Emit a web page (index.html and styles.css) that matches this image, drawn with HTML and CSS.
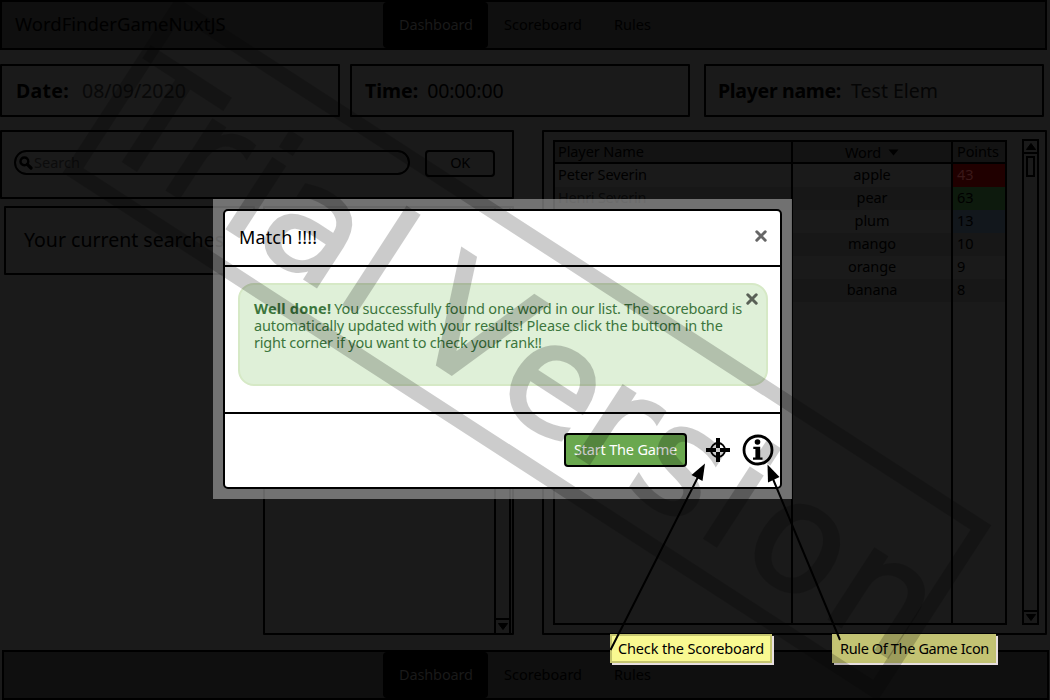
FILE: index.html
```html
<!DOCTYPE html>
<html lang="en">
<head>
<meta charset="utf-8">
<title>WordFinderGameNuxtJS</title>
<link rel="stylesheet" href="styles.css">
</head>
<body>
<div class="screen">
  <header class="nav">
    <div class="brand"><span>WordFinderGameNuxtJS</span></div>
    <nav class="tabs"><a class="tab active"><span>Dashboard</span></a><a class="tab"><span>Scoreboard</span></a><a class="tab"><span>Rules</span></a></nav>
  </header>

  <section class="info">
    <div class="box date"><b>Date:</b><span>08/09/2020</span></div>
    <div class="box time"><b>Time:</b><span>00:00:00</span></div>
    <div class="box player"><b>Player name:</b><span>Test Elem</span></div>
  </section>

  <main class="main">
    <div class="left">
      <div class="search box">
        <div class="field">
          <svg width="14" height="14" viewBox="0 0 14 14"><circle cx="5.4" cy="5.4" r="3.9" fill="none" stroke="#000" stroke-width="2.4"/><path d="M8.3 8.3L12 12" stroke="#000" stroke-width="3.2" stroke-linecap="round"/></svg>
          <span>Search</span>
        </div>
        <div class="ok"><span>OK</span></div>
      </div>
      <div class="lists">
        <div class="current box"><span>Your current searches:</span></div>
        <div class="list box">
          <div class="bar"><svg class="down" width="10" height="7" viewBox="0 0 10 7"><path d="M0.5 0.5H9.5L5 6.5Z" stroke="#000" stroke-linejoin="round"/></svg></div>
        </div>
      </div>
    </div>
    <div class="right box">
      <div class="table">
        <div class="col names"><div class="cell head"><span>Player Name</span></div><div class="cell"><span>Peter Severin</span></div><div class="cell alt dim"><span>Henri Severin</span></div></div>
        <div class="col words"><div class="cell head"><span>Word</span><svg width="11" height="7" viewBox="0 0 11 7"><path d="M0.5 0.5H10.5L5.5 6.5Z"/></svg></div><div class="cell"><span>apple</span></div><div class="cell alt"><span>pear</span></div><div class="cell"><span>plum</span></div><div class="cell alt"><span>mango</span></div><div class="cell"><span>orange</span></div><div class="cell alt"><span>banana</span></div></div>
        <div class="col points"><div class="cell head"><span>Points</span></div><div class="cell red"><span>43</span></div><div class="cell green"><span>63</span></div><div class="cell blue"><span>13</span></div><div class="cell alt"><span>10</span></div><div class="cell"><span>9</span></div><div class="cell alt"><span>8</span></div></div>
      </div>
      <div class="scroll">
        <div class="up"><svg width="10" height="7" viewBox="0 0 10 7"><path d="M0.5 6.5H9.5L5 0.5Z" stroke="#000" stroke-linejoin="round"/></svg></div>
        <div class="thumb"></div>
        <div class="down"><svg width="10" height="7" viewBox="0 0 10 7"><path d="M0.5 0.5H9.5L5 6.5Z" stroke="#000" stroke-linejoin="round"/></svg></div>
      </div>
    </div>
  </main>

  <footer class="nav foot">
    <nav class="tabs"><a class="tab active"><span>Dashboard</span></a><a class="tab"><span>Scoreboard</span></a><a class="tab"><span>Rules</span></a></nav>
  </footer>

  <div class="halo">
    <div class="dialog">
      <div class="dialog-head"><span>Match !!!!</span>
        <svg width="12" height="12" viewBox="0 0 12 12"><path d="M1.8 1.8L10.2 10.2M10.2 1.8L1.8 10.2" stroke="#666" stroke-width="3" stroke-linecap="round"/></svg>
      </div>
      <div class="dialog-body">
        <div class="alert">
          <p><b>Well done!</b><span class="l1">You successfully found one word in our list. The scoreboard is</span><br><span class="l2">automatically updated with your results! Please click the buttom in the</span><br><span class="l3">right corner if you want to check your rank!!</span></p>
          <svg width="12" height="12" viewBox="0 0 12 12"><path d="M1.8 1.8L10.2 10.2M10.2 1.8L1.8 10.2" stroke="#596056" stroke-width="3" stroke-linecap="round"/></svg>
        </div>
      </div>
      <div class="dialog-foot">
        <div class="start"><span>Start The Game</span></div>
        <svg class="target" width="24" height="24" viewBox="0 0 24 24" stroke="#000" fill="none"><circle cx="12" cy="12" r="7" stroke-width="1.8"/><path d="M12 0V10M12 14V24M0 12H10M14 12H24" stroke-width="4"/></svg>
        <svg class="about" width="32" height="32" viewBox="0 0 32 32"><circle cx="16" cy="16" r="14" fill="none" stroke="#000" stroke-width="2.8"/><circle cx="15.5" cy="8" r="2.8"/><path d="M11.3 12.7H18.2V23.6H20.5V25.8H11V23.6H13.4V15H11.3Z"/></svg>
      </div>
    </div>
  </div>

  <div class="note first"><span>Check the Scoreboard</span></div>
  <div class="note second"><span>Rule Of The Game Icon</span></div>

  <svg class="marks" width="1050" height="700" viewBox="0 0 1050 700">
    <path d="M610.500 650L699 475M840 640L773 479" stroke="#000" stroke-width="2"/>
    <path d="M705 463.500L702.500 481L691.500 475Z"/>
    <path d="M767.500 464.500L779.500 477L768 482.500Z"/>
    <g transform="translate(527 349) rotate(32.940)">
      <rect x="-478" y="-97" width="956" height="194" fill="none" stroke="#000" stroke-opacity=".2" stroke-width="15"/>
      <g opacity=".2"><text class="trial" y="62" x="-479 -402 -331 -290 -192 -150 -110 -4 87 154 238 289 387">Trial Version</text></g>
    </g>
  </svg>
</div>
</body>
</html>
```
FILE: styles.css
```css
* { box-sizing: border-box; }
body { margin: 0; background: #1a1a1a; font-family: "Noto Sans", "Open Sans", sans-serif; font-size: 14.5px; color: #000; }
svg { display: block; flex: none; }
span, b { white-space: nowrap; }
.screen { position: relative; width: 1050px; height: 700px; overflow: hidden; display: flex; flex-direction: column; background: #1a1a1a; }
.box { border: 2px solid #000; border-radius: 1px; }

.nav { display: flex; width: 1047px; height: 50px; border: 2px solid #000; background: #0f0f0f; flex: none; }
.brand { width: 381px; padding-left: 13px; font-size: 18.5px; line-height: 44px; }
.tabs { display: flex; }
.tab { padding: 0 16px; line-height: 45px; border-radius: 4px; }
.tab.active { width: 105px; background: #000; color: #1a1a1a; letter-spacing: -.13px; }
.foot { margin: 15px 0 0 2px; }
.foot .tabs { margin-left: 379px; }

.info { display: flex; margin-top: 14px; height: 53px; font-size: 19.5px; line-height: 49px; }
.info .box { width: 340px; padding-left: 14px; }
.date b { letter-spacing: .3px; }
.date span { margin-left: 13px; color: #090909; }
.time { margin-left: 10px; }
.info .time { padding-left: 13px; }
.time span { margin-left: 9px; letter-spacing: -.15px; }
.player { margin-left: 14px; }
.info .player { padding-left: 12px; }
.player b { letter-spacing: -.3px; }
.player span { margin-left: 10px; color: #050505; }

.main { display: flex; gap: 28px; margin-top: 13px; height: 505px; }
.left { width: 514px; display: flex; flex-direction: column; gap: 7px; }
.search { display: flex; height: 69px; padding: 18px 0 0 12px; gap: 15px; }
.field { display: flex; align-items: center; gap: 1px; width: 396px; height: 25px; border: 2px solid #000; border-radius: 13px; padding-left: 3px; color: #0c0c0c; }
.field span { margin-top: -2px; }
.ok { width: 70px; height: 27px; border: 2px solid #000; border-radius: 4px; text-align: center; line-height: 21px; letter-spacing: -.4px; }
.lists { display: flex; gap: 8px; padding-left: 4px; height: 429px; }
.current { width: 251px; height: 69px; padding-left: 18px; font-size: 19.5px; line-height: 64px; }
.list { width: 251px; display: flex; justify-content: flex-end; padding-right: 1px; }
.bar { width: 17px; border: solid #000; border-width: 0 2px; display: flex; flex-direction: column; justify-content: flex-end; }
.bar::before { content: ""; height: 2px; background: #000; margin-bottom: 3px; }
.bar .down { margin: 0 0 3px 2px; }

.right { display: flex; width: 505px; padding: 7px 0 0 9px; }
.table { display: flex; width: 454px; height: 485px; margin-top: 1px; border: 2px solid #000; }
.col { border-right: 2px solid #000; }
.names { width: 238px; }
.words { width: 160px; text-align: center; }
.points { width: 52px; border: 0; }
.cell { height: 23px; line-height: 21px; padding-left: 3px; letter-spacing: -.1px; }
.cell.head { height: 22px; line-height: 19px; border-bottom: 2px solid #000; background: #131313; }
.words .cell { padding-left: 0; }
.words .head { display: flex; justify-content: center; align-items: center; gap: 7px; }
.points .cell { padding-left: 4px; }
.alt { background: #171717; }
.dim { color: #080808; letter-spacing: -.25px; }
.red { background: #200000; color: #3a1818; }
.green { background: #0d1a0d; }
.blue { background: #12171c; }
.scroll { display: flex; flex-direction: column; align-items: center; width: 17px; height: 486px; margin-left: 15px; border: 2px solid #000; }
.up { width: 13px; height: 13px; padding: 2px 0 0 1.500px; border-bottom: 2px solid #000; }
.thumb { width: 9px; height: 21px; margin-top: 2px; border: 2px solid #000; }
.scroll .down { width: 13px; height: 13px; margin-top: auto; padding: 2px 0 0 1.500px; border-top: 2px solid #000; }

.halo { position: absolute; left: 213px; top: 199px; width: 579px; height: 300px; padding: 10px; background: rgba(174, 174, 174, .6); }
.dialog { width: 559px; height: 280px; border: 2px solid #000; border-radius: 5px; background: #fff; }
.dialog-head { display: flex; justify-content: space-between; height: 56px; padding: 0 13px 0 14px; border-bottom: 2px solid #000; font-size: 18px; line-height: 53px; letter-spacing: .15px; }
.dialog-head svg { margin-top: 19px; }
.dialog-body { height: 147px; padding: 16px 12px 0 13px; border-bottom: 2px solid #000; }
.alert { display: flex; justify-content: space-between; height: 103px; padding: 8px 8px 0 14px; border: 2px solid #d6e9c6; border-radius: 16px; background: #dff0d8; color: #3c763d; }
.alert p { width: 491px; margin: 7px 0 0; line-height: 17px; white-space: nowrap; }
.alert b { letter-spacing: .2px; margin-right: 3px; }
.l1 { letter-spacing: -.16px; }
.l2 { letter-spacing: -.13px; }
.l3 { letter-spacing: -.22px; }
.dialog-foot { display: flex; align-items: center; height: 71px; padding-left: 339px; }
.start { width: 123px; height: 34px; border: 2px solid #000; border-radius: 4px; background: #6aa84f; color: #fff; line-height: 29px; padding-left: 8px; letter-spacing: -.19px; }
.target { margin-left: 19px; }
.about { margin-left: 12px; }

.note { position: absolute; top: 634px; height: 29px; padding-left: 6px; border: 2px solid #c5c56f; background: #f9f991; box-shadow: 2px 2px 0 #e8dfe0; line-height: 25px; }
.first { left: 610px; width: 162px; letter-spacing: -.15px; }
.second { left: 832px; width: 164px; background: #c3c373; border-color: #c1c172; letter-spacing: -.36px; }
.marks { position: absolute; left: 0; top: 0; }
.trial { font-family: "DejaVu Sans", sans-serif; font-size: 152px; stroke: #000; stroke-width: 3px; }
```
